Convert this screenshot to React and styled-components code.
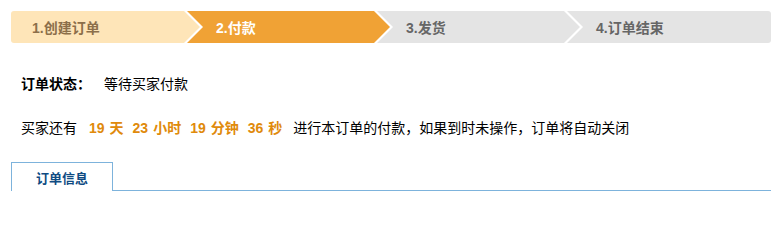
import React from "react";
import styled, { createGlobalStyle, css } from "styled-components";

// --------------------------------------------------

const GlobalStyle = createGlobalStyle`
	html, body {
		margin: 0;
		padding: 0;
		background: #fff;
	}

	body {
		font-family: "Liberation Sans", "Noto Sans CJK SC", sans-serif;
		font-size: 14px;
		color: #000;
	}
`;

const Page = styled.div`
	width: 760px;
	padding: 11px 5px 0 11px;
`;

// ---------- steps ----------

const DEPTH = 16;

const stepColors = {
	done: { bg: "#fee5b8", fg: "#8c6f4a" },
	current: { bg: "#f0a235", fg: "#ffffff" },
	todo: { bg: "#e4e4e4", fg: "#666666" },
};

const StepBar = styled.div`
	display: flex;
	height: 32px;
`;

const Step = styled.div`
	display: flex;
	align-items: center;
	flex: none;
	box-sizing: border-box;
	height: 100%;
	width: ${ props => props.width }px;
	margin-left: ${ props => props.first ? 0 : -13 }px;
	padding-left: ${ props => props.first ? 21 : 29 }px;
	background: ${ props => stepColors[props.state].bg };
	color: ${ props => stepColors[props.state].fg };
	font-weight: bold;
	font-size: 14px;
	border-radius: ${ props => props.first ? "3px 0 0 3px" : props.last ? "0 3px 3px 0" : "0" };

	${ props => props.first && css`
		clip-path: polygon(0 0, calc(100% - ${ DEPTH }px) 0, 100% 50%, calc(100% - ${ DEPTH }px) 100%, 0 100%);
	` }

	${ props => !props.first && !props.last && css`
		clip-path: polygon(0 0, calc(100% - ${ DEPTH }px) 0, 100% 50%, calc(100% - ${ DEPTH }px) 100%, 0 100%, ${ DEPTH }px 50%);
	` }

	${ props => props.last && css`
		clip-path: polygon(0 0, 100% 0, 100% 100%, 0 100%, ${ DEPTH }px 50%);
	` }
`;

// ---------- status ----------

const Status = styled.div`
	display: flex;
	flex-direction: column;
	gap: 24px;
	margin-top: 31px;
	padding-left: 10px;
`;

const Line = styled.div`
	display: flex;
	align-items: center;
	height: 20px;
	line-height: 20px;
	white-space: nowrap;
`;

const Label = styled.span`
	font-weight: bold;
	margin-right: 13px;
`;

const Countdown = styled.span`
	display: flex;
	gap: 9px;
	margin: 0 11px 0 12px;
	color: #e08a0b;
	font-weight: bold;
`;

const Unit = styled.span`
	& > b {
		margin-right: 5px;
	}
`;

// ---------- tabs ----------

const TabBar = styled.div`
	display: flex;
	margin-top: 24px;
	border-bottom: 1px solid #7db3dc;
`;

const Tab = styled.div`
	display: flex;
	align-items: center;
	justify-content: center;
	box-sizing: border-box;
	width: 102px;
	height: 29px;
	margin-bottom: -1px;
	border: 1px solid #7db3dc;
	border-bottom: none;
	background: #fff;
	color: #0f4b82;
	font-size: 13px;
	font-weight: bold;
`;

// --------------------------------------------------

const steps = [
	{ label: "1.创建订单", state: "done", width: 189 },
	{ label: "2.付款", state: "current", width: 203 },
	{ label: "3.发货", state: "todo", width: 203 },
	{ label: "4.订单结束", state: "todo", width: 204 },
];

const remaining = [
	[ "19", "天" ],
	[ "23", "小时" ],
	[ "19", "分钟" ],
	[ "36", "秒" ],
];

const App = () => (
	<Page>
		<GlobalStyle />
		<StepBar>
			{ steps.map((s, i) => (
				<Step
					key = { s.label }
					state = { s.state }
					width = { s.width }
					first = { i === 0 }
					last = { i === steps.length - 1 }
				>
					{ s.label }
				</Step>
			)) }
		</StepBar>

		<Status>
			<Line>
				<Label>订单状态：</Label>
				等待买家付款
			</Line>
			<Line>
				买家还有
				<Countdown>
					{ remaining.map(([ n, u ], i) => (
						<Unit key = { i }><b>{ n }</b>{ u }</Unit>
					)) }
				</Countdown>
				进行本订单的付款，如果到时未操作，订单将自动关闭
			</Line>
		</Status>

		<TabBar>
			<Tab>订单信息</Tab>
		</TabBar>
	</Page>
);

export default App;
